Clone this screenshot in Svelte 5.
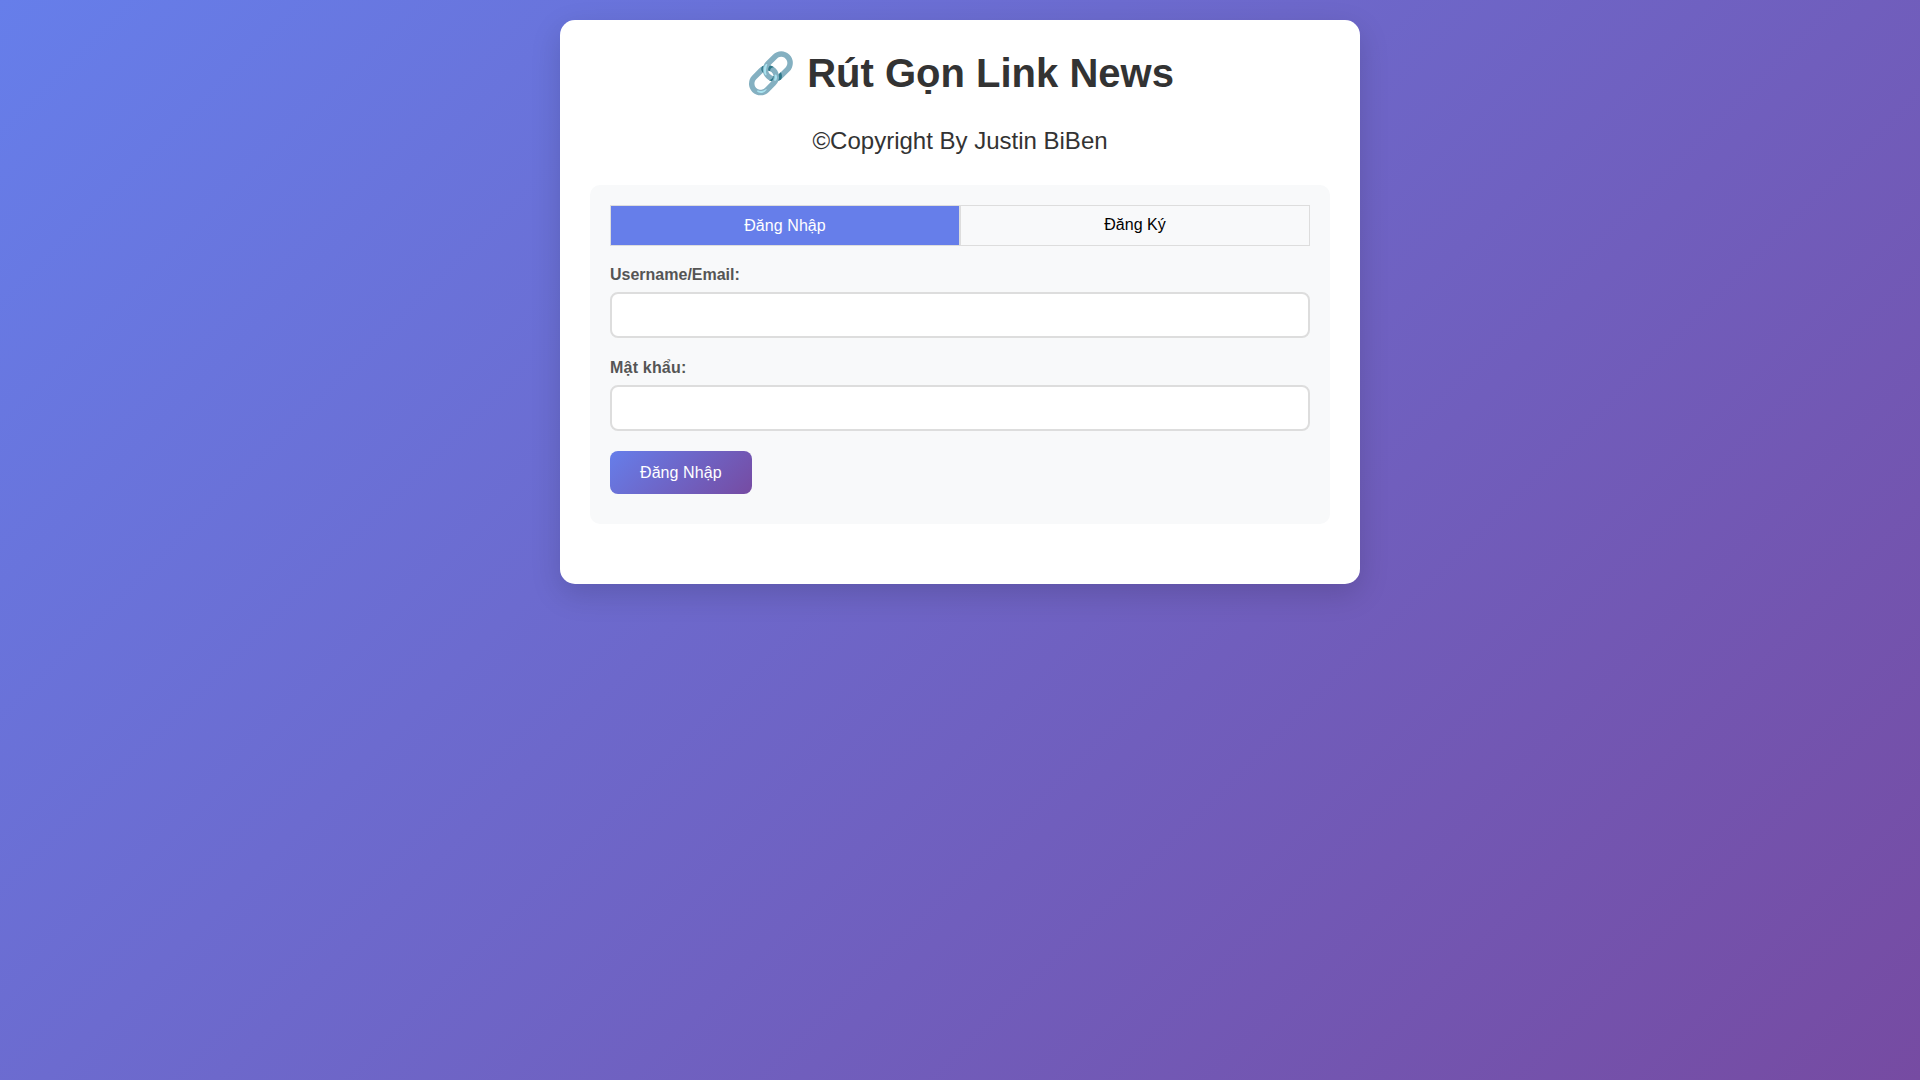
<script>
  let tab = $state('login');
</script>

<div class="container">
  <h1>🔗 Rút Gọn Link News</h1>
  <p class="copy">©Copyright By Justin BiBen</p>

  <div class="auth">
    <div class="tabs">
      <button class="tab" class:active={tab === 'login'} onclick={() => (tab = 'login')}>Đăng Nhập</button>
      <button class="tab" class:active={tab === 'register'} onclick={() => (tab = 'register')}>Đăng Ký</button>
    </div>

    <form onsubmit={(e) => e.preventDefault()}>
      <div class="group">
        <label for="user">Username/Email:</label>
        <input id="user" type="text" />
      </div>
      <div class="group">
        <label class="tall" for="pass">Mật khẩu:</label>
        <input id="pass" type="password" />
      </div>
      <button class="submit" type="submit">Đăng Nhập</button>
    </form>
  </div>
</div>

<style>
:global(body) {
  margin: 0;
  min-height: 1080px;
  font-family: "Liberation Sans", Arial, sans-serif;
  background: linear-gradient(135deg, #667eea 0%, #764ba2 100%);
}

.container {
  box-sizing: border-box;
  width: 800px;
  margin: 20px auto 0;
  padding: 30px;
  background: white;
  border-radius: 15px;
  box-shadow: 0 10px 30px rgba(0, 0, 0, 0.15);
}

h1 {
  margin: 0 0 30px;
  font-size: 40px;
  font-weight: bold;
  text-align: center;
  color: #333;
}

.copy {
  margin: 0 0 30px;
  font-size: 24px;
  text-align: center;
  color: #333;
}

.auth {
  margin-bottom: 30px;
  padding: 20px 20px 30px;
  background: #f8f9fa;
  border-radius: 10px;
}

.tabs {
  display: flex;
  margin-bottom: 20px;
}

.tab {
  flex: 1;
  padding: 10px 0 11px;
  border: 1px solid #ddd;
  background: #f8f9fa;
  color: #000;
  font: 16px "Liberation Sans", Arial, sans-serif;
  line-height: 18px;
}

.tab.active {
  padding: 10px 0;
  background: #667eea;
  color: white;
  line-height: 19px;
  letter-spacing: 0.08px;
}

.group {
  margin-bottom: 20px;
}

label {
  display: block;
  margin-bottom: 8px;
  font-weight: bold;
  font-size: 16px;
  line-height: 18px;
  color: #555;
}

label.tall {
  line-height: 19px;
  letter-spacing: 0.2px;
}

input {
  display: block;
  box-sizing: border-box;
  width: 100%;
  height: 46px;
  padding: 12px;
  border: 2px solid #ddd;
  border-radius: 8px;
  background: white;
  font-size: 16px;
}

.submit {
  display: block;
  padding: 12px 30px;
  border: none;
  border-radius: 8px;
  background: linear-gradient(135deg, #667eea 0%, #764ba2 100%);
  color: white;
  font: 16px "Liberation Sans", Arial, sans-serif;
  line-height: 19px;
  letter-spacing: 0.08px;
}
</style>
